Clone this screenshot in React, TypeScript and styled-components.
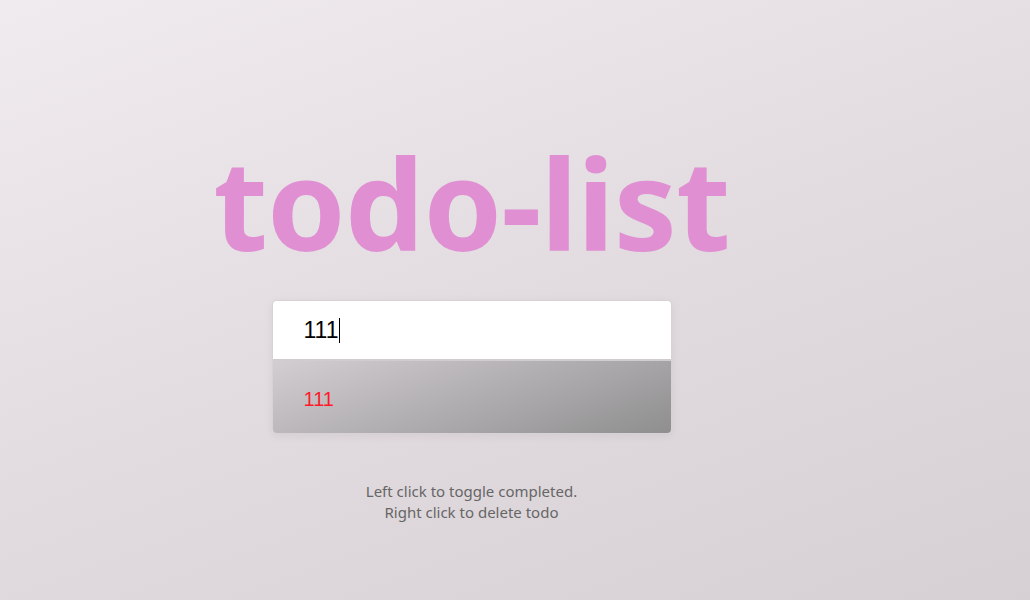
import React from "react";
import styled, { createGlobalStyle } from "styled-components";

const Global = createGlobalStyle`
  html, body { margin: 0; padding: 0; height: 100%; }
  body {
    font-family: "Noto Sans", "Open Sans", sans-serif;
    background: linear-gradient(160deg, #f0ebef 0%, #e2dce0 50%, #d6d0d4 100%);
    min-height: 600px;
    overflow: hidden;
  }
`;

const Page = styled.div`
  width: 943px;
  height: 600px;
  display: flex;
  flex-direction: column;
  align-items: center;
`;

const Title = styled.h1`
  margin: 127px 0 0;
  font-family: "Noto Sans", sans-serif;
  font-weight: 700;
  font-size: 126px;
  line-height: 150px;
  color: #e090d2;
  letter-spacing: -1px;
`;

const Card = styled.div`
  margin-top: 23px;
  width: 398px;
  border-radius: 5px;
  box-shadow: 0 2px 10px rgba(0, 0, 0, 0.06);
  overflow: hidden;
  border: 1px solid #d8d2d6;
`;

const Field = styled.div`
  position: relative;
`;

const Input = styled.input`
  display: block;
  box-sizing: border-box;
  width: 100%;
  height: 60px;
  border: none;
  border-bottom: 2px solid #d0ccd0;
  outline: none;
  padding: 1px 0 0 31px;
  font-family: "Liberation Sans", Arial, sans-serif;
  font-size: 23px;
  color: #000;
  background: #fff;
  caret-color: transparent;
`;

const Caret = styled.span`
  position: absolute;
  left: 66px;
  top: 17px;
  width: 1px;
  height: 25px;
  background: #000;
`;

const Item = styled.div`
  box-sizing: border-box;
  height: 72px;
  display: flex;
  align-items: center;
  padding: 4px 0 0 31px;
  background: linear-gradient(160deg, #d2ced2 0%, #b1aeb1 50%, #8f8f8f 100%);
  font-family: "Liberation Sans", Arial, sans-serif;
  font-size: 20px;
  color: #ff1a2a;
`;

const Hint = styled.p`
  margin: 47px 0 0;
  text-align: center;
  font-family: "Noto Sans", sans-serif;
  font-size: 15px;
  line-height: 21px;
  color: #666;
`;

export default function App() {
  return (
    <>
      <Global />
      <Page>
        <Title>todo-list</Title>
        <Card>
          <Field>
            <Input defaultValue="111" />
            <Caret />
          </Field>
          <Item>111</Item>
        </Card>
        <Hint>
          Left click to toggle completed.
          <br />
          Right click to delete todo
        </Hint>
      </Page>
    </>
  );
}
